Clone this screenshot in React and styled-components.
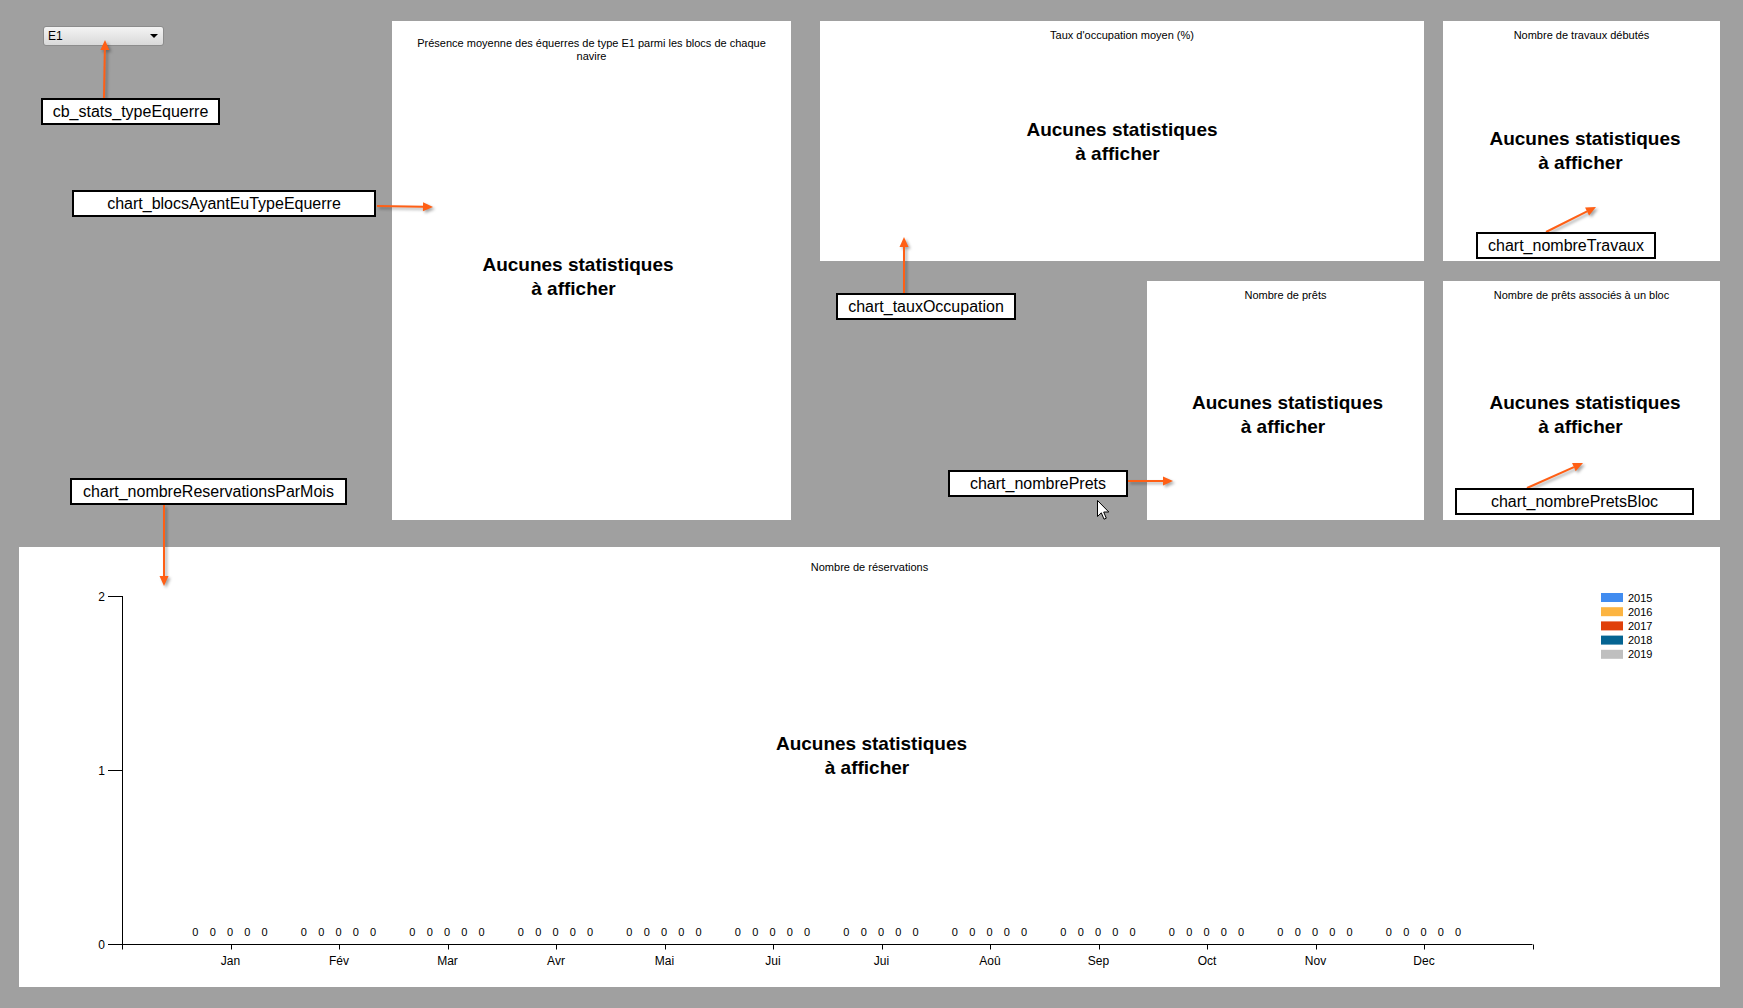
import React from 'react';
import styled, { createGlobalStyle } from 'styled-components';

const GlobalStyle = createGlobalStyle`
  html, body { margin: 0; padding: 0; overflow: hidden; background: #a0a0a0; }
  body { font-family: "Liberation Sans", Arial, sans-serif; }
`;

const Page = styled.div`
  position: relative;
  width: 1743px;
  height: 1008px;
  box-sizing: border-box;
  padding: 21px 23px 0 19px;
  background: #a0a0a0;
`;

const TopGrid = styled.div`
  display: grid;
  grid-template-columns: 373px 399px 29px 327px 277px 19px 277px;
  grid-template-rows: 240px 20px 239px;
`;

const ComboArea = styled.div`
  grid-column: 1;
  grid-row: 1 / 4;
  padding: 5px 0 0 24px;
`;

const Combo = styled.div`
  width: 121px;
  height: 20px;
  box-sizing: border-box;
  display: flex;
  align-items: center;
  justify-content: space-between;
  padding: 0 4px 0 4px;
  border: 1px solid #8c8c8c;
  border-radius: 3px;
  background: linear-gradient(#f4f4f4, #e6e6e6 50%, #d9d9d9);
  font-size: 12px;
  color: #000;
`;

const Caret = styled.span`
  width: 0;
  height: 0;
  border-left: 4px solid transparent;
  border-right: 4px solid transparent;
  border-top: 4px solid #000;
  margin-right: 1px;
`;

const Panel = styled.div`
  grid-column: ${p => p.$col};
  grid-row: ${p => p.$row};
  background: #fff;
  display: flex;
  flex-direction: column;
  position: relative;
`;

const Title = styled.div`
  padding: ${p => p.$top}px ${p => p.$side || 4}px 0;
  font-size: 11px;
  line-height: 13px;
  text-align: center;
  color: #000;
`;

const Body = styled.div`
  flex: 1;
  display: flex;
  align-items: center;
  justify-content: center;
  padding: ${p => p.$pt || 0}px ${p => p.$pr || 0}px ${p => p.$pb || 0}px ${p => p.$pl || 0}px;
`;

const Message = styled.div`
  display: flex;
  flex-direction: column;
  align-items: center;
  font-size: 19px;
  font-weight: bold;
  line-height: 24px;
  color: #000;
`;

const SecondLine = styled.span`
  padding-right: 9px;
`;

const BottomPanel = styled.div`
  margin-top: 27px;
  height: 440px;
  background: #fff;
  position: relative;
  display: flex;
  flex-direction: column;
`;

const Overlay = styled.div`
  position: absolute;
  left: 4px;
  right: 0;
  top: 185px;
  display: flex;
  justify-content: center;
`;

const ChartSvg = styled.svg`
  display: block;
  font-family: "Liberation Sans", Arial, sans-serif;
  font-size: 11px;
`;

const AxisText = styled.text`
  font-size: 12px;
`;

const Tag = styled.div`
  position: absolute;
  left: ${p => p.$x}px;
  top: ${p => p.$y}px;
  width: ${p => p.$w}px;
  height: 27px;
  box-sizing: border-box;
  border: 2px solid #000;
  background: #fff;
  display: flex;
  align-items: center;
  justify-content: center;
  font-size: 16px;
  color: #000;
  white-space: nowrap;
`;

const ArrowLayer = styled.svg`
  position: absolute;
  left: 0;
  top: 0;
  pointer-events: none;
  filter: drop-shadow(2px 2px 1.5px rgba(0, 0, 0, 0.35));
`;

const Cursor = styled.svg`
  position: absolute;
  left: 1097px;
  top: 500px;
`;

function NoStats() {
  return (
    <Message>
      <span>Aucunes statistiques</span>
      <SecondLine>à afficher</SecondLine>
    </Message>
  );
}

function Arrow({ x1, y1, x2, y2 }) {
  const dx = x2 - x1;
  const dy = y2 - y1;
  const len = Math.hypot(dx, dy);
  const ux = dx / len;
  const uy = dy / len;
  const hl = 10;
  const hw = 4.5;
  const bx = x2 - ux * hl;
  const by = y2 - uy * hl;
  const pts = `${x2},${y2} ${bx - uy * hw},${by + ux * hw} ${bx + uy * hw},${by - ux * hw}`;
  return (
    <g>
      <line x1={x1} y1={y1} x2={bx} y2={by} stroke="#ff5f15" strokeWidth="2" />
      <polygon points={pts} fill="#ff5f15" />
    </g>
  );
}

const months = ['Jan', 'Fév', 'Mar', 'Avr', 'Mai', 'Jui', 'Jui', 'Aoû', 'Sep', 'Oct', 'Nov', 'Dec'];
const legend = [
  ['2015', '#418cf0'],
  ['2016', '#fcb441'],
  ['2017', '#e0400a'],
  ['2018', '#056492'],
  ['2019', '#bfbfbf'],
];

function ReservationsChart() {
  const x0 = 103;
  const step = 108.5;
  const axisY = 370.5;
  const ticks = Array.from({ length: 14 }, (_, k) => x0 + k * step);
  return (
    <ChartSvg width="1701" height="413">
      <line x1="103.5" y1="22" x2="103.5" y2={axisY} stroke="#000" />
      <line x1={x0} y1={axisY} x2={x0 + 13 * step} y2={axisY} stroke="#000" />
      {[[22.5, '2'], [196.5, '1'], [370.5, '0']].map(([y, t]) => (
        <g key={t}>
          <line x1="89" y1={y} x2="103" y2={y} stroke="#000" />
          <AxisText x="86" y={y + 4.5} textAnchor="end">{t}</AxisText>
        </g>
      ))}
      {ticks.map(x => (
        <line key={x} x1={Math.round(x) + 0.5} y1={axisY} x2={Math.round(x) + 0.5} y2={axisY + 5} stroke="#000" />
      ))}
      {months.map((m, i) => {
        const cx = x0 + (i + 1) * step;
        return (
          <g key={i}>
            <AxisText x={cx} y="390.5" textAnchor="middle">{m}</AxisText>
            {[-2, -1, 0, 1, 2].map(j => (
              <text key={j} x={cx - 0.5 + j * 17.3} y="362" textAnchor="middle">0</text>
            ))}
          </g>
        );
      })}
      {legend.map(([y, c], i) => (
        <g key={y}>
          <rect x="1582" y={19 + i * 14.2} width="22" height="9" fill={c} />
          <text x="1609" y={27.5 + i * 14.2}>{y}</text>
        </g>
      ))}
    </ChartSvg>
  );
}

export default function App() {
  return (
    <>
      <GlobalStyle />
      <Page>
        <TopGrid>
          <ComboArea>
            <Combo>
              <span>E1</span>
              <Caret />
            </Combo>
          </ComboArea>

          <Panel $col="2" $row="1 / 4">
            <Title $top={16} $side={20}>
              Présence moyenne des équerres de type E1 parmi les blocs de chaque navire
            </Title>
            <Body $pb={29} $pr={27}>
              <NoStats />
            </Body>
          </Panel>

          <Panel $col="4 / 6" $row="1">
            <Title $top={8}>Taux d'occupation moyen (%)</Title>
            <Body $pb={20}>
              <NoStats />
            </Body>
          </Panel>

          <Panel $col="7" $row="1">
            <Title $top={8}>Nombre de travaux débutés</Title>
            <Body $pb={1} $pl={7}>
              <NoStats />
            </Body>
          </Panel>

          <Panel $col="5" $row="3">
            <Title $top={8}>Nombre de prêts</Title>
            <Body $pt={8} $pl={4}>
              <NoStats />
            </Body>
          </Panel>

          <Panel $col="7" $row="3">
            <Title $top={8}>Nombre de prêts associés à un bloc</Title>
            <Body $pt={8} $pl={7}>
              <NoStats />
            </Body>
          </Panel>
        </TopGrid>

        <BottomPanel>
          <Title $top={14}>Nombre de réservations</Title>
          <ReservationsChart />
          <Overlay>
            <NoStats />
          </Overlay>
        </BottomPanel>

        <ArrowLayer width="1743" height="1008">
          <Arrow x1={104} y1={98} x2={105} y2={40} />
          <Arrow x1={377} y1={206} x2={433} y2={207} />
          <Arrow x1={904} y1={293} x2={904} y2={237} />
          <Arrow x1={1128} y1={481} x2={1173} y2={481} />
          <Arrow x1={1546} y1={232} x2={1596} y2={207} />
          <Arrow x1={1527} y1={488} x2={1583} y2={463} />
          <Arrow x1={164} y1={505} x2={164} y2={586} />
        </ArrowLayer>

        <Tag $x={41} $y={98} $w={179}>cb_stats_typeEquerre</Tag>
        <Tag $x={72} $y={190} $w={304}>chart_blocsAyantEuTypeEquerre</Tag>
        <Tag $x={836} $y={293} $w={180}>chart_tauxOccupation</Tag>
        <Tag $x={948} $y={470} $w={180}>chart_nombrePrets</Tag>
        <Tag $x={1476} $y={232} $w={180}>chart_nombreTravaux</Tag>
        <Tag $x={1455} $y={488} $w={239}>chart_nombrePretsBloc</Tag>
        <Tag $x={70} $y={478} $w={277}>chart_nombreReservationsParMois</Tag>

        <Cursor width="13" height="21" viewBox="0 0 13 21">
          <path d="M0.5 0.5 L0.5 16.5 L4.3 12.8 L7 19.2 L9.3 18.2 L6.7 12 L11.8 12 Z" fill="#fff" stroke="#000" strokeWidth="1" strokeLinejoin="round" />
        </Cursor>
      </Page>
    </>
  );
}
